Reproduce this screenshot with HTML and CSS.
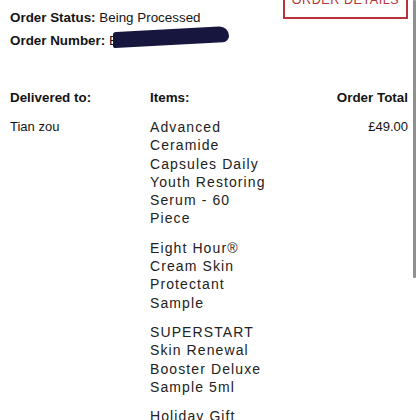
FILE: index.html
```html
<!DOCTYPE html>
<html>
<head>
<meta charset="utf-8">
<link rel="stylesheet" href="styles.css">
</head>
<body>
<div class="page">
  <div class="header">
    <div class="info">
      <div class="line"><b>Order Status:</b> Being Processed</div>
      <div class="line"><b>Order Number:</b> <span class="redact-wrap">B<span class="redact"></span></span></div>
    </div>
    <div class="btn">ORDER DETAILS</div>
  </div>
  <div class="table">
    <div class="th">Delivered to:</div>
    <div class="th">Items:</div>
    <div class="th right">Order Total</div>
    <div class="td">Tian zou</div>
    <div class="items">
      <div class="item">Advanced Ceramide Capsules Daily Youth Restoring Serum - 60 Piece</div>
      <div class="item">Eight Hour® Cream Skin Protectant Sample</div>
      <div class="item">SUPERSTART Skin Renewal Booster Deluxe Sample 5ml</div>
      <div class="item">Holiday Gift Bag</div>
    </div>
    <div class="td right">£49.00</div>
  </div>
  <div class="scrollbar"></div>
</div>
</body>
</html>
```
FILE: styles.css
```css
html, body {
  margin: 0;
  padding: 0;
  background: #ffffff;
  overflow: hidden;
}
.page {
  position: relative;
  width: 420px;
  height: 420px;
  overflow: hidden;
  box-sizing: border-box;
  padding: 0 12px 0 10px;
  font-family: "Liberation Sans", Arial, sans-serif;
  color: #141414;
  font-size: 13.4px;
}
.header {
  display: flex;
  justify-content: space-between;
  align-items: flex-start;
}
.info {
  padding-top: 6px;
}
.line {
  line-height: 23px;
  height: 23px;
}
.line b {
  font-weight: bold;
}
.redact-wrap {
  position: relative;
  display: inline-block;
}
.redact {
  position: absolute;
  left: 4px;
  top: 0;
  width: 116px;
  height: 16px;
  background: #16163f;
  border-radius: 3px 10px 6px 2px;
  transform: skewY(-3deg);
}
.btn {
  margin-top: -13px;
  width: 121px;
  height: 28px;
  border: 2px solid #b8323a;
  color: #b8323a;
  font-size: 12.5px;
  letter-spacing: 0.6px;
  text-align: center;
  line-height: 22px;
  box-sizing: content-box;
}
.table {
  display: grid;
  grid-template-columns: 140px 118px 1fr;
  margin-top: 37px;
}
.th {
  font-weight: bold;
  line-height: 18px;
  margin-bottom: 11px;
}
.td {
  line-height: 18px;
  font-size: 13px;
}
.right {
  text-align: right;
}
.items {
  font-size: 14px;
  letter-spacing: 1.1px;
  line-height: 18.3px;
  color: #222;
}
.item {
  margin-bottom: 11px;
}
.scrollbar {
  position: absolute;
  left: 413px;
  top: 0;
  width: 3px;
  height: 278px;
  background: #909090;
  border-radius: 1px;
}
```
